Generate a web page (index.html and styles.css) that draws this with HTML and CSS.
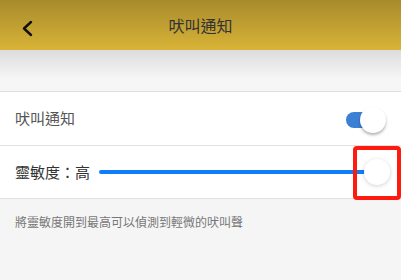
FILE: index.html
```html
<!DOCTYPE html>
<html>
<head>
	<meta charset="utf-8">
	<meta name="viewport" content="width=device-width, initial-scale=1">
	<title>吠叫通知</title>
	<link rel="stylesheet" href="styles.css">
</head>
<body>
	<div class="header">
		<svg class="back" width="14" height="18" viewBox="0 0 14 18">
			<path d="M10 2 L3 8.5 L10 15" fill="none" stroke="#111" stroke-width="2.4" stroke-linecap="round" stroke-linejoin="round"/>
		</svg>
		<div class="title">吠叫通知</div>
	</div>

	<div class="band"></div>

	<div class="row">
		<div class="label">吠叫通知</div>
		<div class="toggle">
			<div class="track"></div>
			<div class="knob"></div>
		</div>
	</div>

	<div class="row slider-row">
		<div class="label dark">靈敏度：高</div>
		<div class="slider">
			<div class="line"></div>
			<div class="knob"></div>
		</div>
		<div class="mark"></div>
	</div>

	<div class="note">將靈敏度開到最高可以偵測到輕微的吠叫聲</div>
</body>
</html>
```

FILE: styles.css
```css
body {
	margin: 0;
	background: #f5f5f5;
	font-family: "Noto Sans CJK TC", "Noto Sans", sans-serif;
	height: 280px;
	overflow: hidden;
}

.header {
	height: 50px;
	background: linear-gradient(#a78a2c, #d9b437);
	display: flex;
	align-items: center;
	justify-content: center;
	position: relative;
}
.back { position: absolute; left: 21px; top: 20px; }
.title { font-size: 16px; color: #333; }

.band {
	height: 41px;
	background: linear-gradient(#dcdcdc, #f6f6f6 70%);
	border-bottom: 1px solid #dedede;
}

.row {
	height: 53px;
	background: #fff;
	border-bottom: 1px solid #e2e2e2;
	display: flex;
	align-items: center;
	padding: 0 15px;
	position: relative;
}
.label { font-size: 15px; color: #555; margin-top: -2px; }
.label.dark { color: #333; }

.toggle {
	margin-left: auto;
	width: 40px;
	height: 26px;
	position: relative;
}
.toggle .track {
	position: absolute;
	left: 0; top: 6px;
	width: 30px; height: 16px;
	border-radius: 8px;
	background: #3c80d6;
}
.knob {
	width: 26px; height: 26px;
	border-radius: 50%;
	background: #fff;
	box-shadow: 0 2px 3px rgba(0,0,0,0.3);
}
.toggle .knob { position: absolute; right: 0; top: 1px; }

.slider-row { height: 52px; padding-right: 11px; }
.slider {
	flex: 1;
	display: flex;
	align-items: center;
	margin-left: 9px;
}
.slider .line {
	flex: 1;
	height: 4px;
	border-radius: 2px;
	background: #0f7df8;
	margin-right: -2px;
}
.slider .knob { box-shadow: 0 1px 4px rgba(0,0,0,0.18); }

.mark {
	position: absolute;
	right: 0; top: 0;
	width: 40px; height: 46px;
	border: 4px solid #ff1a10;
	border-radius: 4px;
}

.note {
	padding: 14px 15px;
	font-size: 12px;
	color: #777;
}
```
